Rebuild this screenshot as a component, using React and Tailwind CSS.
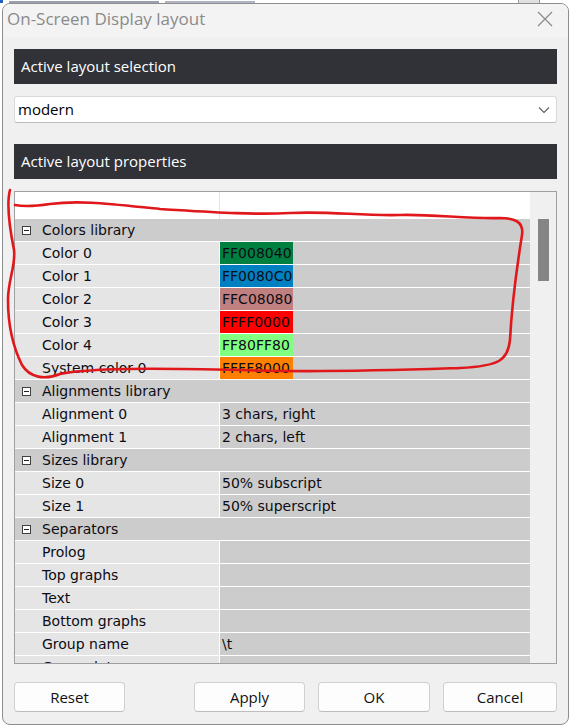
import React from "react";

const groups = [
  {
    name: "Colors library",
    items: [
      { n: "Color 0", v: "FF008040", sw: "bg-[#008040]" },
      { n: "Color 1", v: "FF0080C0", sw: "bg-[#0080c0]" },
      { n: "Color 2", v: "FFC08080", sw: "bg-[#c08080]" },
      { n: "Color 3", v: "FFFF0000", sw: "bg-[#ff0000]" },
      { n: "Color 4", v: "FF80FF80", sw: "bg-[#80ff80]" },
      { n: "System color 0", v: "FFFF8000", sw: "bg-[#ff8000]" },
    ],
  },
  {
    name: "Alignments library",
    items: [
      { n: "Alignment 0", v: "3 chars, right" },
      { n: "Alignment 1", v: "2 chars, left" },
    ],
  },
  {
    name: "Sizes library",
    items: [
      { n: "Size 0", v: "50% subscript" },
      { n: "Size 1", v: "50% superscript" },
    ],
  },
  {
    name: "Separators",
    items: [
      { n: "Prolog", v: "" },
      { n: "Top graphs", v: "" },
      { n: "Text", v: "" },
      { n: "Bottom graphs", v: "" },
      { n: "Group name", v: "\\t" },
      { n: "Group data", v: "" },
    ],
  },
];

const SectionBar = ({ children }) => (
  <div className="h-[35px] bg-[#313238] flex items-center px-[7px] text-white text-[15px] font-['Open_Sans',sans-serif]">
    {children}
  </div>
);

const MinusBox = () => (
  <span className="w-[9px] h-[9px] border border-[#404040] bg-white flex items-center justify-center">
    <span className="w-[5px] h-[1px] bg-[#202020]" />
  </span>
);

const GroupRow = ({ name }) => (
  <div className="h-[23px] shrink-0 border-b border-white bg-[#cccccc] flex items-center">
    <div className="w-[27px] pl-[7px] flex items-center">
      <MinusBox />
    </div>
    <span>{name}</span>
  </div>
);

const ItemRow = ({ item }) => (
  <div className="h-[23px] shrink-0 border-b border-white flex">
    <div className="w-[204px] bg-[#e5e5e5] pl-[27px] flex items-center">{item.n}</div>
    <div className="w-px bg-white" />
    <div className="flex-1 bg-[#cccccc] flex items-center">
      {item.sw ? (
        <span className={`h-full w-[73px] pl-[2px] flex items-center ${item.sw}`}>{item.v}</span>
      ) : (
        <span className="pl-[2px]">{item.v}</span>
      )}
    </div>
  </div>
);

const Button = ({ children, className }) => (
  <button className={`h-[30px] rounded-[4px] border border-[#d0d0d0] border-b-[#bdbdbd] bg-[#fdfdfd] text-[15px] text-[#111] font-['Open_Sans',sans-serif] ${className}`}>
    {children}
  </button>
);

export default function App() {
  return (
    <div className="w-[571px] h-[727px] bg-white relative overflow-hidden">
      {/* window behind the dialog */}
      <div className="h-[3px] flex bg-white">
        <div className="w-[3px] bg-[#2060c0]" />
        <div className="ml-[6px] mt-[1px] w-[150px] h-[2px] bg-[#9aa0b0]" />
        <div className="ml-[6px] mt-[1px] w-[90px] h-[2px] bg-[#b0b4c0]" />
        <div className="ml-auto mr-[31px] w-[22px] border-x border-[#999] bg-[#e0e0e0]" />
      </div>

      <div className="ml-[2px] w-[567px] h-[722px] border border-[#8e8e8e] rounded-[8px] bg-[#f0f0f0] flex flex-col overflow-hidden">
        <div className="h-[33px] shrink-0 bg-[#f3f3f3] flex items-center pl-[4px] pr-[15px] pb-[3px]">
          <span className="text-[17px] text-[#8a8a8a] font-['Open_Sans',sans-serif]">On-Screen Display layout</span>
          <svg className="ml-auto" width="16" height="16" viewBox="0 0 16 16">
            <path d="M1 1L15 15M15 1L1 15" stroke="#8a8a8a" strokeWidth="1.2" fill="none" />
          </svg>
        </div>

        <div className="flex-1 flex flex-col px-[11px] pt-[12px]">
          <SectionBar>Active layout selection</SectionBar>

          <div className="mt-[12px] h-[27px] bg-white border border-[#d9d9d9] border-b-[#bcbcbc] rounded-[3px] flex items-center pl-[3px] pr-[6px] text-[15px] text-black font-['Open_Sans',sans-serif]">
            <span>modern</span>
            <svg className="ml-auto" width="12" height="8" viewBox="0 0 12 8">
              <path d="M1 1.5L6 6.5L11 1.5" stroke="#606060" strokeWidth="1.1" fill="none" />
            </svg>
          </div>

          <div className="mt-[21px]">
            <SectionBar>Active layout properties</SectionBar>
          </div>

          <div className="mt-[12px] h-[473px] shrink-0 border border-[#a0a0a0] flex overflow-hidden text-[14px] text-[#0c0c14] font-['DejaVu_Sans',sans-serif]">
            <div className="flex-1 flex flex-col overflow-hidden">
              <div className="h-[27px] shrink-0 bg-white flex">
                <div className="w-[204px]" />
                <div className="w-px bg-[#e4e4e4]" />
              </div>
              {groups.map((g) => (
                <React.Fragment key={g.name}>
                  <GroupRow name={g.name} />
                  {g.items.map((it) => (
                    <ItemRow key={it.n} item={it} />
                  ))}
                </React.Fragment>
              ))}
            </div>
            <div className="w-[26px] bg-[#f0f0f0] flex justify-center pt-[27px] pl-[1px]">
              <div className="w-[11px] h-[62px] bg-[#858585]" />
            </div>
          </div>

          <div className="mt-[18px] flex">
            <Button className="w-[111px]">Reset</Button>
            <Button className="ml-auto w-[111px]">Apply</Button>
            <Button className="ml-[13px] w-[112px]">OK</Button>
            <Button className="ml-[13px] w-[114px]">Cancel</Button>
          </div>
        </div>
      </div>

      {/* red hand-drawn annotation */}
      <svg className="absolute left-0 top-0 pointer-events-none" width="571" height="727" viewBox="0 0 571 727">
        <path
          d="M10 190 C6 205 10 230 14 250 C16 265 8 280 8 300 C8 320 12 345 22 365 C30 378 45 380 60 374 C90 368 150 368 240 370 C320 373 400 370 460 368 C500 366 508 360 510 340 C512 300 518 260 522 235 C524 222 515 218 500 218 C470 219 430 214 400 215 C360 216 330 211 290 213 C250 215 210 212 160 209 C110 204 80 200 50 204 C30 207 20 206 15 205"
          stroke="#e0181c"
          strokeWidth="2.6"
          fill="none"
          strokeLinecap="round"
          strokeLinejoin="round"
        />
      </svg>
    </div>
  );
}
